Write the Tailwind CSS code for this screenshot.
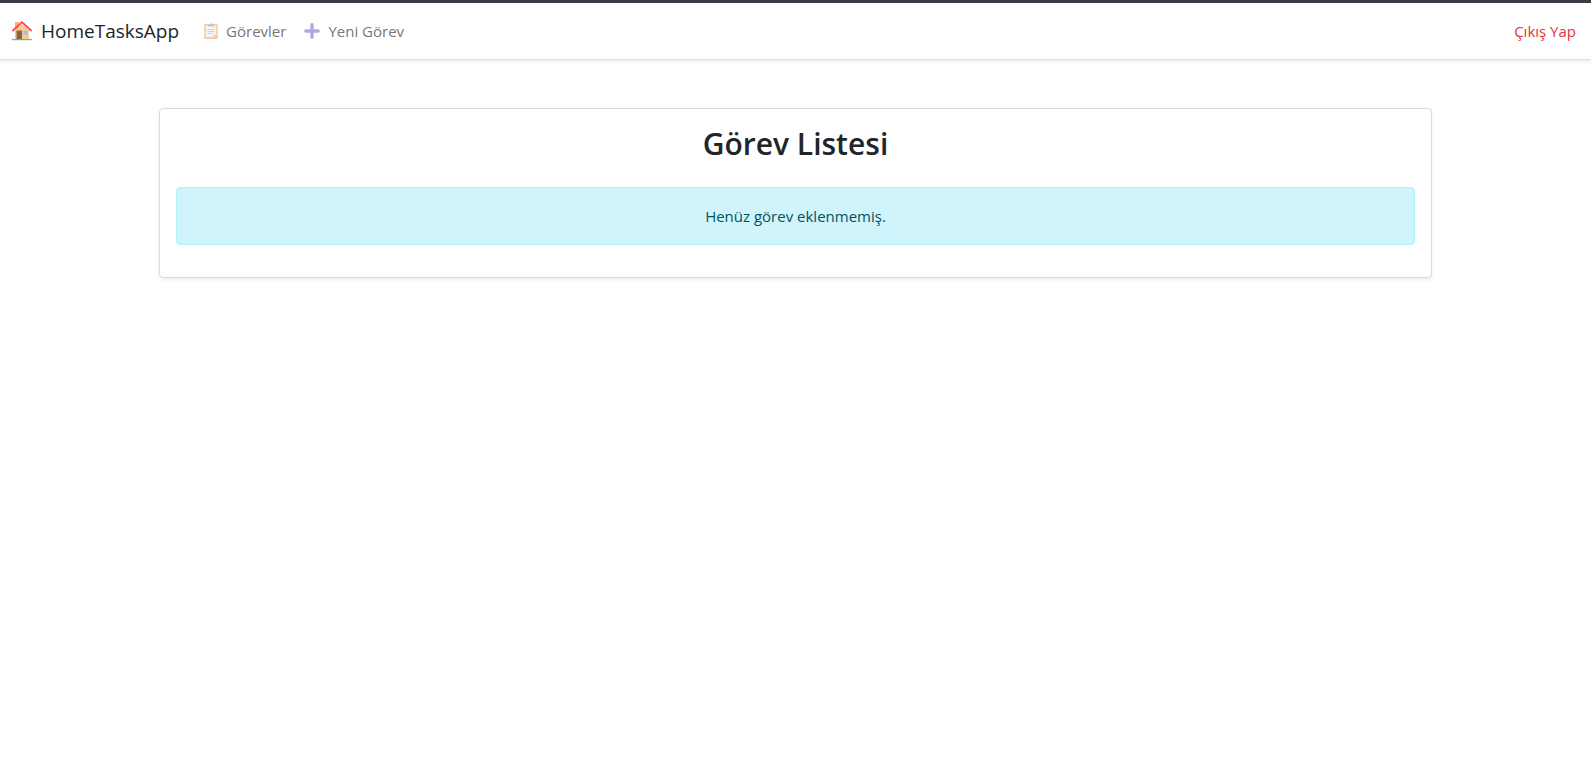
<!DOCTYPE html>
<html lang="tr">
<head>
<meta charset="utf-8">
<meta name="viewport" content="width=device-width, initial-scale=1">
<title>HomeTasksApp</title>
<script src="https://cdn.jsdelivr.net/npm/@tailwindcss/browser@4"></script>
</head>
<body class="min-h-screen border-t-3 border-[#3b3b45] bg-white font-['Segoe_UI','Open_Sans',sans-serif] text-base text-[#212529]">
<nav class="flex h-[57px] items-center border-b border-[#dcdedf] bg-white px-3 shadow-[0_2px_4px_rgba(0,0,0,0.075)]">
  <a href="#" class="flex items-center gap-[9px] text-[19px] leading-8">
    <svg class="size-5" viewBox="0 0 20 20" aria-hidden="true">
      <path fill="#e9b878" d="M3 1h4v7H3z"/>
      <path fill="#fcc98a" d="M3 9.500 10 3l7 6.500V18H3z"/>
      <path fill="#8c6152" d="M4.500 9.500h5.500V18H4.500z"/>
      <path fill="#83c9ff" d="M11.500 9.500h4v4h-4z"/>
      <path fill="none" stroke="#f9464f" stroke-width="1.800" stroke-linecap="round" stroke-linejoin="round" d="M1 9.500 10 1.200l9 8.300"/>
      <path fill="#20dc8b" d="M0 18h20v1.200H0z"/>
    </svg>
    <span>HomeTasksApp</span>
  </a>
  <div class="ml-[25px] flex flex-1 items-center gap-[18px] text-[15px] leading-6 text-[#777]">
    <a href="#" class="flex items-center gap-2">
      <svg class="h-4 w-[14px]" viewBox="0 0 14 16" aria-hidden="true">
        <rect x=".3" y="1" width="13.400" height="15" rx="1" fill="#f2c89f"/>
        <path fill="#f7f4f8" d="M1.800 2.500h10.400v9L9.500 14.300H1.800z"/>
        <path fill="#ddd5dc" d="M9.500 11.500h2.700L9.500 14.300z"/>
        <path fill="#c8c4c8" d="M4 1.300h2a1 1 0 0 1 2 0h2v2.200H4z"/>
        <path stroke="#d3ceda" d="M3.500 6.500h7M3.500 8.500h7M3.500 10.500h5"/>
      </svg>
      <span>Görevler</span>
    </a>
    <a href="#" class="flex items-center gap-2">
      <svg class="size-4" viewBox="0 0 16 16" aria-hidden="true">
        <path fill="none" stroke="#b6a5e2" stroke-width="3.400" stroke-linecap="round" d="M8 1.800v12.400M1.800 8h12.400"/>
      </svg>
      <span>Yeni Görev</span>
    </a>
  </div>
  <button type="button" class="px-[3px] text-[15px] leading-6 text-[#dc3545]">Çıkış Yap</button>
</nav>
<main class="mx-auto mt-12 w-4/5 rounded border border-[#dbdbdb] bg-white p-4 shadow-[0_2px_4px_rgba(0,0,0,0.075)]">
  <h2 class="mb-6 text-center text-[30px] leading-[38px] font-semibold">Görev Listesi</h2>
  <div role="alert" class="mb-4 rounded border border-[#b6effb] bg-[#cff4fc] p-4 text-center text-[15px] leading-6 text-[#055160]">Henüz görev eklenmemiş.</div>
</main>
</body>
</html>
